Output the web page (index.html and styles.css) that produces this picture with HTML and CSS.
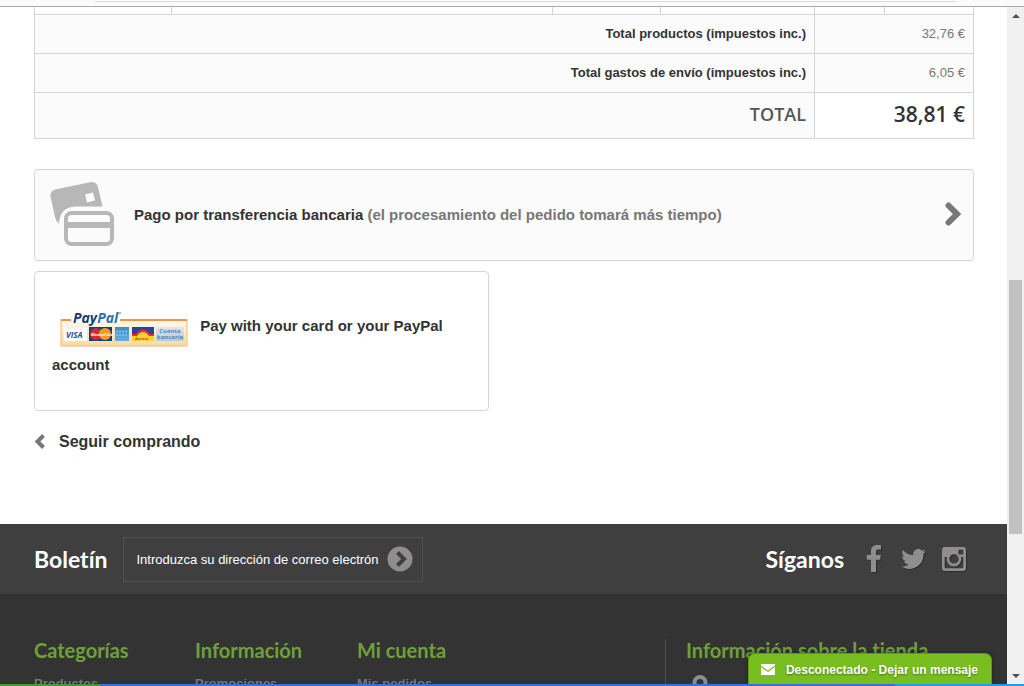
FILE: index.html
```html
<!DOCTYPE html>
<html lang="es">
<head>
	<meta charset="UTF-8">
	<meta name="viewport" content="width=device-width, initial-scale=1">
	<title>Forma de pago</title>
	<link rel="stylesheet" href="styles.css">
</head>
<body>
	<div class="toolbar"><div class="address-bar"></div></div>
	<div class="viewport">
		<div class="page">
			<main class="container">
				<table class="cart-summary">
					<colgroup>
						<col class="col-product">
						<col>
						<col class="col-avail">
						<col class="col-unit">
						<col class="col-qty">
						<col class="col-total">
					</colgroup>
					<tbody>
						<tr class="cart-item"><td></td><td></td><td></td><td></td><td></td><td></td></tr>
						<tr>
							<th colspan="4" scope="row">Total productos (impuestos inc.)</th>
							<td colspan="2">32,76 €</td>
						</tr>
						<tr>
							<th colspan="4" scope="row">Total gastos de envío (impuestos inc.)</th>
							<td colspan="2">6,05 €</td>
						</tr>
						<tr class="cart-total">
							<th colspan="4" scope="row">TOTAL</th>
							<td colspan="2">38,81 €</td>
						</tr>
					</tbody>
				</table>

				<a class="payment bankwire" href="#">
					<svg class="cards-icon" viewBox="0 0 64 64" aria-hidden="true">
						<path fill="#b7b7b7" d="M9 41.500Q6 39 5 35L0.600 15Q-0.500 9.500 5 7.500L40 0.300Q46 -0.800 48 5L52.500 24.500H25Q10 25.500 9 41.500Z"/>
						<path fill="#fbfbfb" d="M35 12.500l8-2 2 8-8 2z"/>
						<rect x="16" y="31" width="46" height="31" rx="5.500" fill="#fbfbfb" stroke="#b7b7b7" stroke-width="4"/>
						<path fill="#b7b7b7" d="M16 40h46v6H16z"/>
					</svg>
					<span class="payment-name">Pago por transferencia bancaria <span class="note">(el procesamiento del pedido tomará más tiempo)</span></span>
					<svg class="chevron" viewBox="0 0 16 24" aria-hidden="true"><path d="M3.500 3.500L12 12l-8.500 8.500" fill="none" stroke="#777" stroke-width="6" stroke-linecap="round"/></svg>
				</a>

				<a class="payment paypal" href="#">
					<svg class="paypal-logo" viewBox="0 0 128 37" role="img" aria-label="PayPal">
						<defs>
							<linearGradient id="cream" x1="0" y1="0" x2="0" y2="1"><stop offset="0" stop-color="#fffaf0"/><stop offset="1" stop-color="#fbd9a0"/></linearGradient>
							<linearGradient id="amex" x1="0" y1="0" x2="0" y2="1"><stop offset="0" stop-color="#3b8ccb"/><stop offset="1" stop-color="#65aee0"/></linearGradient>
							<linearGradient id="bank" x1="0" y1="0" x2="0" y2="1"><stop offset="0" stop-color="#dfe6ee"/><stop offset="1" stop-color="#b9c8dc"/></linearGradient>
						</defs>
						<rect x="1" y="10" width="126" height="26" fill="url(#cream)" stroke="#fab968"/>
						<path d="M1 10h126" stroke="#f7923a" stroke-width="2"/>
						<path d="M11 7h49v6H11z" fill="#fff"/>
						<text x="13" y="13" class="pp">Pay<tspan class="pp-light">Pal</tspan></text>
						<path d="M58 3h3" stroke="#777" stroke-width="1"/>
						<rect x="4" y="18" width="23" height="13" fill="#fff"/>
						<text x="6" y="28" class="visa">VISA</text>
						<rect x="29" y="17" width="23" height="14" fill="#173f78"/>
						<circle cx="36" cy="24" r="6" fill="#d9272e"/>
						<circle cx="45" cy="24" r="6" fill="#f59b25"/>
						<text x="31" y="26" class="tiny tiny-white">MasterCard</text>
						<rect x="55" y="17" width="14" height="14" fill="url(#amex)"/>
						<path d="M56 21.500h12M56 25h12" stroke="#8fc4e8" stroke-width="1.500" stroke-dasharray="2 1"/>
						<rect x="72" y="17" width="22" height="14" fill="#ffcf2e"/>
						<path d="M72 17h22v8h-5q-6-8-12 0h-5z" fill="#29449a"/>
						<path d="M72 24h4q7-9 14 0h4v2H72z" fill="#e6342c"/>
						<path d="M77 26q6-8 12 0z" fill="#ffcf2e"/>
						<text x="75" y="30" class="tiny tiny-brown">Aurora</text>
						<rect x="96" y="17" width="28" height="14" fill="url(#bank)"/>
						<text x="110" y="23" class="bank">Cuenta</text>
						<text x="110" y="29" class="bank">bancaria</text>
					</svg>
					Pay with your card or your PayPal account
				</a>

				<a class="continue" href="#">
					<svg class="back-arrow" viewBox="0 0 12 16" aria-hidden="true"><path d="M9.500 1.500L3.500 7.500l6 6" fill="none" stroke="#777" stroke-width="4"/></svg>
					Seguir comprando
				</a>
			</main>

			<footer>
				<div class="newsletter-bar">
					<label class="bar-title" for="newsletter">Boletín</label>
					<form class="newsletter">
						<input id="newsletter" type="text" value="Introduzca su dirección de correo electrón">
						<button type="button" aria-label="Suscribirse">
							<svg viewBox="0 0 26 26" aria-hidden="true"><circle cx="13" cy="13" r="12.500" fill="#8f8d8d"/><path d="M10.500 6.500L17 13l-6.500 6.500" fill="none" stroke="#3f3f3f" stroke-width="4"/></svg>
						</button>
					</form>
					<div class="social">
						<span class="bar-title">Síganos</span>
						<a href="#" aria-label="Facebook"><svg class="facebook" viewBox="0 0 16 28" aria-hidden="true"><path d="M15 .2v4.300h-2.600c-2 0-2.400 1-2.400 2.400v3H14.800l-.7 4.800H10V27H5V14.700H.8V9.900H5V6.300C5 2.200 7.500 0 11.300 0c1.800 0 3.300.1 3.700.2z"/></svg></a>
						<a href="#" aria-label="Twitter"><svg class="twitter" viewBox="0 0 26 22" aria-hidden="true"><path d="M25 3.100a10 10 0 0 1-2.500 2.600c.4 8.500-6 15.200-14.400 15.200A14 14 0 0 1 .4 18.600c2.600.3 5.200-.4 7.200-2a5 5 0 0 1-4.600-3.500c.8.100 1.500.1 2.200-.1a5 5 0 0 1-4-5c.7.400 1.500.6 2.300.6A5 5 0 0 1 2 2a14 14 0 0 0 10.300 5.200A5 5 0 0 1 20.800 2.600c1.100-.2 2.200-.6 3.200-1.200a5 5 0 0 1-2.200 2.800c1-.1 2.100-.4 3.200-1.100z"/></svg></a>
						<a href="#" aria-label="Instagram"><svg class="instagram" viewBox="0 0 24 24" aria-hidden="true"><path fill-rule="evenodd" d="M3 0h18a3 3 0 0 1 3 3v18a3 3 0 0 1-3 3H3a3 3 0 0 1-3-3V3a3 3 0 0 1 3-3zM2.700 10v10q0 1.300 1.300 1.300h16q1.300 0 1.300-1.300V10h-2.200A7.400 7.400 0 1 1 4.900 10zM17.500 2.700q-1 0-1 1v2.700q0 1 1 1h2.800q1 0 1-1V3.700q0-1-1-1zM12 7.300a4.700 4.700 0 1 0 0 9.400 4.700 4.700 0 0 0 0-9.400z"/></svg></a>
					</div>
				</div>
				<div class="footer-columns">
					<section>
						<h4>Categorías</h4>
						<a href="#">Productos</a>
					</section>
					<section>
						<h4>Información</h4>
						<a href="#">Promociones</a>
					</section>
					<section>
						<h4>Mi cuenta</h4>
						<a href="#">Mis pedidos</a>
					</section>
					<section class="store">
						<h4>Información sobre la tienda</h4>
						<svg class="pin" viewBox="0 0 16 24" aria-hidden="true"><path fill-rule="evenodd" d="M8 0a7.500 7.500 0 0 1 7.500 7.500C15.500 12 11 17 8 23 5 17 .5 12 .5 7.500A7.500 7.500 0 0 1 8 0zm0 4a3.500 3.500 0 1 0 0 7 3.500 3.500 0 0 0 0-7z"/></svg>
					</section>
				</div>
			</footer>
			<button class="chat" type="button">
				<svg viewBox="0 0 14 12" aria-hidden="true"><path fill="#fff" d="M0 0h14v1.500L7 6.500 0 1.500zM0 3l7 5 7-5v8H0z"/></svg>
				Desconectado - Dejar un mensaje
			</button>
		</div>
		<div class="scrollbar" aria-hidden="true">
			<span class="arrow-up"></span>
			<div class="track"><div class="thumb"></div></div>
			<span class="arrow-down"></span>
		</div>
	</div>
	<div class="taskbar"><div class="start"></div><div class="tasks"></div><div class="tray"></div></div>
</body>
</html>
```
FILE: styles.css
```css
* {
    box-sizing: border-box;
}
body {
    margin: 0;
    height: 100vh;
    display: flex;
    flex-direction: column;
    overflow: hidden;
    background: #fff;
    color: #333;
    font: 13px/18px "Liberation Sans", Arial, sans-serif;
}
a {
    color: inherit;
    text-decoration: none;
}

/* browser frame */
.toolbar {
    flex: none;
    height: 7px;
    padding: 0 67px 0 95px;
    background: #fbfbfb;
    border-bottom: 1px solid #a9a9a9;
}
.address-bar {
    height: 2px;
    border-bottom: 1px solid #dcdcdc;
}
.viewport {
    flex: 1;
    min-height: 0;
    display: flex;
}
.page {
    flex: 1;
    min-width: 0;
    overflow: hidden;
    position: relative;
}
.scrollbar {
    flex: none;
    width: 17px;
    padding: 7px 0 6px;
    background: #f0f0f0;
    display: flex;
    flex-direction: column;
    align-items: center;
}
.arrow-up, .arrow-down {
    border: 4px solid transparent;
}
.arrow-up {
    border-top: 0;
    border-bottom-color: #505050;
}
.arrow-down {
    border-bottom: 0;
    border-top-color: #505050;
}
.track {
    flex: 1;
    width: 13px;
    padding-top: 262px;
}
.thumb {
    height: 254px;
    background: #c1c1c1;
}
.taskbar {
    flex: none;
    height: 2px;
    display: flex;
    background: #2f72e0;
}
.start {
    width: 100px;
    background: #3c9a3c;
}
.tasks {
    flex: 1;
}
.tray {
    width: 129px;
    background: #14a0ef;
}

/* order summary */
.container {
    padding: 0 33px 0 34px;
}
.cart-summary {
    width: 100%;
    table-layout: fixed;
    border-collapse: separate;
    border-spacing: 0;
    border-left: 1px solid #d6d4d4;
}
.col-product {
    width: 137px;
}
.col-avail {
    width: 108px;
}
.col-unit {
    width: 154px;
}
.col-qty {
    width: 70px;
}
.col-total {
    width: 89px;
}
.cart-summary th, .cart-summary td {
    height: 39px;
    padding: 0 8px;
    text-align: right;
    background: #fbfbfb;
    border: solid #d6d4d4;
    border-width: 0 1px 1px 0;
}
.cart-summary td {
    color: #777;
}
.cart-summary .cart-item td {
    height: 8px;
    padding: 0;
    background: #fff;
}
.cart-summary .cart-total th, .cart-summary .cart-total td {
    height: 46px;
    padding-bottom: 3px;
    font-family: "Open Sans", sans-serif;
    font-weight: 600;
}
.cart-summary .cart-total th {
    font-size: 18px;
    color: #555;
}
.cart-summary .cart-total td {
    font-size: 21px;
    color: #333;
    background: #fff;
}

/* payment methods */
.payment {
    display: block;
    border: 1px solid #d6d4d4;
    border-radius: 4px;
    font-size: 15px;
    line-height: 23px;
    font-weight: bold;
}
.bankwire {
    margin-top: 30px;
    min-height: 92px;
    padding: 0 12px 2px 15px;
    display: flex;
    align-items: center;
    background: #fbfbfb;
}
.cards-icon {
    width: 64px;
    height: 64px;
    margin-right: 20px;
}
.payment-name {
    flex: 1;
}
.note {
    color: #777;
}
.chevron {
    width: 16px;
    height: 24px;
}
.paypal {
    width: 455px;
    min-height: 140px;
    margin-top: 10px;
    padding: 30px 17px;
}
.paypal-logo {
    width: 128px;
    height: 37px;
    margin: 8px 8px 6px;
    vertical-align: middle;
    overflow: visible;
}
.pp {
    font: italic bold 14px "Open Sans", sans-serif;
    fill: #1d3a6e;
}
.pp-light {
    fill: #2a72ad;
}
.visa {
    font: italic bold 8px "Open Sans", sans-serif;
    fill: #1c4f9c;
}
.tiny {
    font: italic bold 4px "Open Sans", sans-serif;
}
.tiny-white {
    fill: #fff;
}
.tiny-brown {
    fill: #a06a1c;
}
.bank {
    font: bold 6px "Open Sans", sans-serif;
    fill: #5b82b5;
    text-anchor: middle;
}
.continue {
    display: inline-flex;
    align-items: center;
    gap: 13px;
    margin-top: 20px;
    font-size: 16px;
    line-height: 22px;
    font-weight: bold;
}
.back-arrow {
    width: 12px;
    height: 16px;
}

/* footer */
footer {
    margin-top: 69px;
    height: 400px;
    background: #333;
}
.newsletter-bar {
    height: 70px;
    padding: 0 41px 0 34px;
    display: flex;
    align-items: center;
    background: #3f3f3f;
}
.bar-title {
    font: bold 23px/24px Lato, sans-serif;
    font-variant-ligatures: none;
    color: #fff;
}
.newsletter {
    width: 300px;
    height: 45px;
    margin-left: 16px;
    padding: 0 9px 0 12px;
    display: flex;
    align-items: center;
    border: 1px solid #515151;
}
.newsletter input {
    flex: 1;
    min-width: 0;
    padding: 0;
    border: 0;
    outline: 0;
    background: none;
    color: #fff;
    font: 13px "Liberation Sans", Arial, sans-serif;
}
.newsletter button {
    flex: none;
    width: 26px;
    height: 26px;
    padding: 0;
    border: 0;
    background: none;
}
.newsletter svg {
    display: block;
}
.social {
    margin-left: auto;
    display: flex;
    align-items: center;
}
.social svg {
    display: block;
    fill: #8f8d8d;
    filter: drop-shadow(1px 1px 0 #2b2b2b);
}
.facebook {
    width: 16px;
    height: 28px;
    margin-left: 22px;
}
.twitter {
    width: 26px;
    height: 22px;
    margin-left: 19px;
}
.instagram {
    width: 24px;
    height: 24px;
    margin-left: 15px;
}
.footer-columns {
    padding: 45px 33px 0 34px;
    display: grid;
    grid-template-columns: 161px 162px 1fr 309px;
}
.footer-columns h4 {
    margin: 0 0 14px;
    font: bold 20px/22px Lato, sans-serif;
    font-variant-ligatures: none;
    color: #6fa03a;
    white-space: nowrap;
}
.footer-columns a {
    color: #777;
    font-weight: bold;
    text-shadow: 1px 1px 0 #222;
}
.store {
    padding-left: 20px;
    border-left: 1px solid #515151;
}
.pin {
    display: block;
    width: 16px;
    height: 24px;
    margin: 0 0 40px 6px;
    fill: #8f8d8d;
}

/* chat tab sits over the page */
.chat {
    position: absolute;
    right: 15px;
    bottom: 0;
    height: 31px;
    padding: 2px 13px 0 12px;
    display: flex;
    align-items: center;
    gap: 11px;
    border: 1px solid #5f9c14;
    border-bottom: 0;
    border-radius: 7px 7px 0 0;
    background: #78be20;
    box-shadow: 0 0 4px rgba(0, 0, 0, .4);
    color: #fff;
    font: bold 12px "Liberation Sans", Arial, sans-serif;
    text-shadow: 0 1px 2px rgba(0, 0, 0, .4);
}
.chat svg {
    width: 14px;
    height: 12px;
}
```
